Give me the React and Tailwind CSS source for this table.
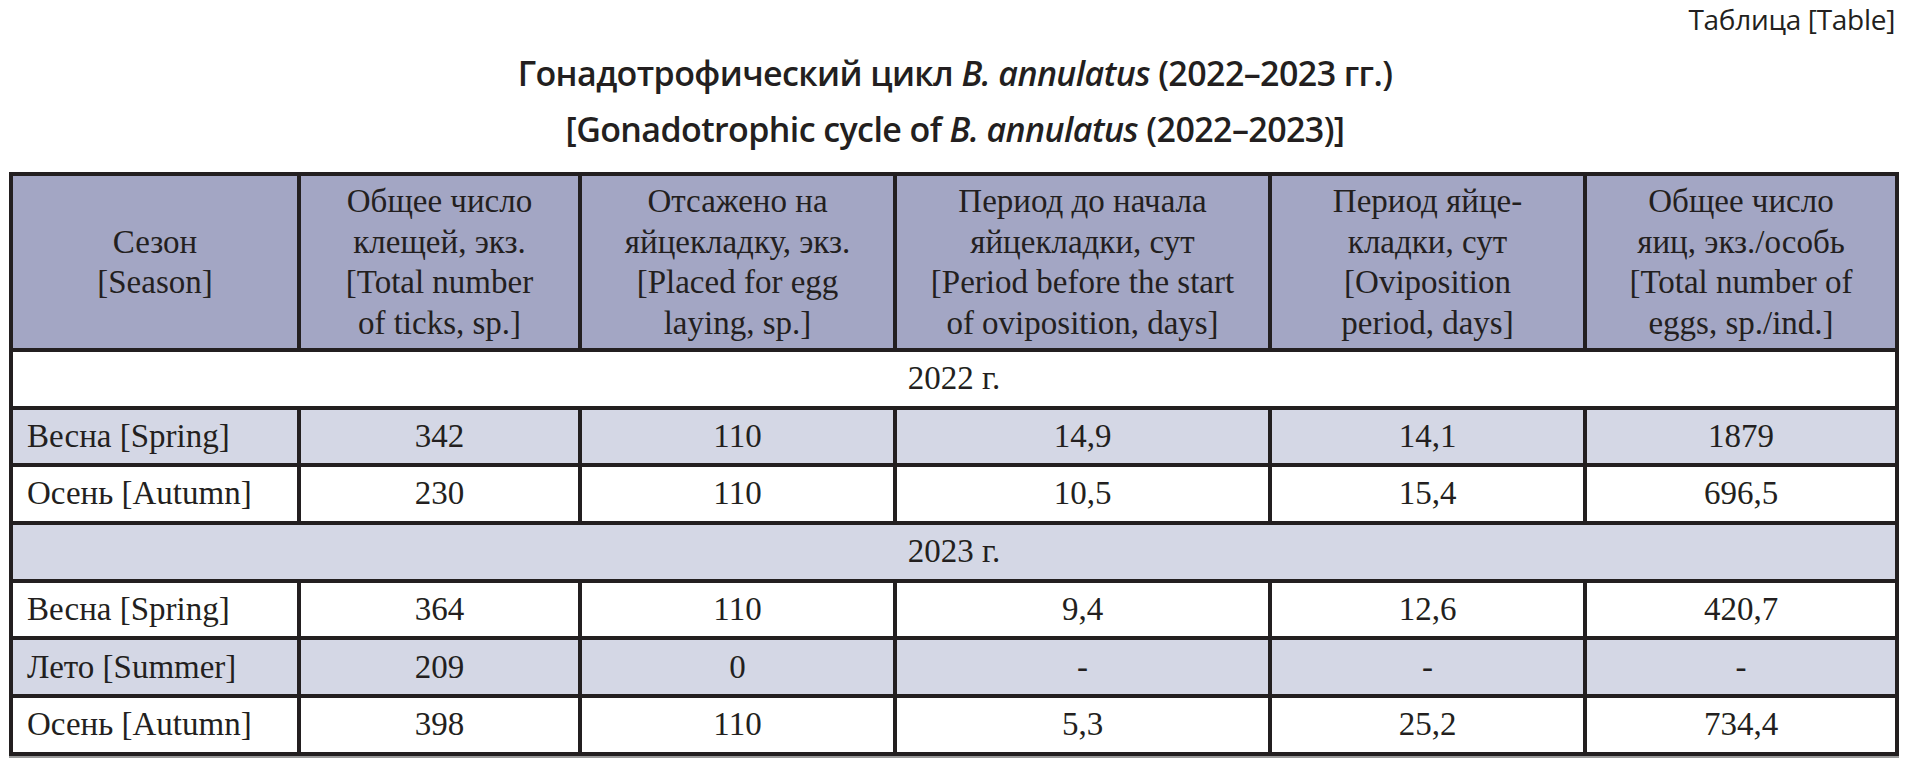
const serif = { fontFamily: '"Liberation Serif", "Times New Roman", serif' };

const header = [
  ["Сезон", "[Season]"],
  ["Общее число", "клещей, экз.", "[Total number", "of ticks, sp.]"],
  ["Отсажено на", "яйцекладку, экз.", "[Placed for egg", "laying, sp.]"],
  ["Период до начала", "яйцекладки, сут", "[Period before the start", "of oviposition, days]"],
  ["Период яйце-", "кладки, сут", "[Oviposition", "period, days]"],
  ["Общее число", "яиц, экз./особь", "[Total number of", "eggs, sp./ind.]"],
];

const rows = [
  { year: "2022 г.", light: false },
  { cells: ["Весна [Spring]", "342", "110", "14,9", "14,1", "1879"], light: true },
  { cells: ["Осень [Autumn]", "230", "110", "10,5", "15,4", "696,5"], light: false },
  { year: "2023 г.", light: true },
  { cells: ["Весна [Spring]", "364", "110", "9,4", "12,6", "420,7"], light: false },
  { cells: ["Лето [Summer]", "209", "0", "-", "-", "-"], light: true },
  { cells: ["Осень [Autumn]", "398", "110", "5,3", "25,2", "734,4"], light: false },
];

export default function App() {
  return (
    <div className="w-[1910px] h-[762px] bg-white text-[#231f20] overflow-hidden">
      <div
        className="text-right pr-[15px] pt-[2px] text-[28px] leading-[34px]"
        style={{ fontFamily: '"Open Sans", "Noto Sans", sans-serif', letterSpacing: "-0.3px" }}
      >
        Таблица [Table]
      </div>

      <div
        className="mt-[9px] text-center font-semibold text-[34px] leading-[56px] tracking-[-0.6px]"
        style={{ fontFamily: '"Open Sans", "Noto Sans", sans-serif' }}
      >
        <div>
          Гонадотрофический цикл <i>B. annulatus</i> (2022–2023 гг.)
        </div>
        <div>
          [Gonadotrophic cycle of <i>B. annulatus</i> (2022–2023)]
        </div>
      </div>

      <div
        className="mt-[15px] ml-[9px] w-fit grid grid-cols-[284px_277px_311px_371px_311px_308px] gap-[4px] p-[4px] bg-[#231f20] shadow-[0_2px_0_#9a9a9a]"
        style={serif}
      >
        {header.map((lines, i) => (
          <div
            key={i}
            className="h-[172px] bg-[#a3a6c4] flex flex-col items-center justify-center text-center text-[33px] leading-[40.5px]"
          >
            {lines.map((l, j) => (
              <div key={j}>{l}</div>
            ))}
          </div>
        ))}

        {rows.map((r, i) =>
          r.year ? (
            <div
              key={i}
              className={`col-span-6 h-[53.7px] flex items-center justify-center text-[33px] ${
                r.light ? "bg-[#d4d7e5]" : "bg-white"
              }`}
            >
              {r.year}
            </div>
          ) : (
            r.cells.map((c, j) => (
              <div
                key={i + "-" + j}
                className={`h-[53.7px] flex items-center text-[33px] ${
                  j === 0 ? "justify-start pl-[14px]" : "justify-center"
                } ${r.light ? "bg-[#d4d7e5]" : "bg-white"}`}
              >
                {c}
              </div>
            ))
          )
        )}
      </div>
    </div>
  );
}
